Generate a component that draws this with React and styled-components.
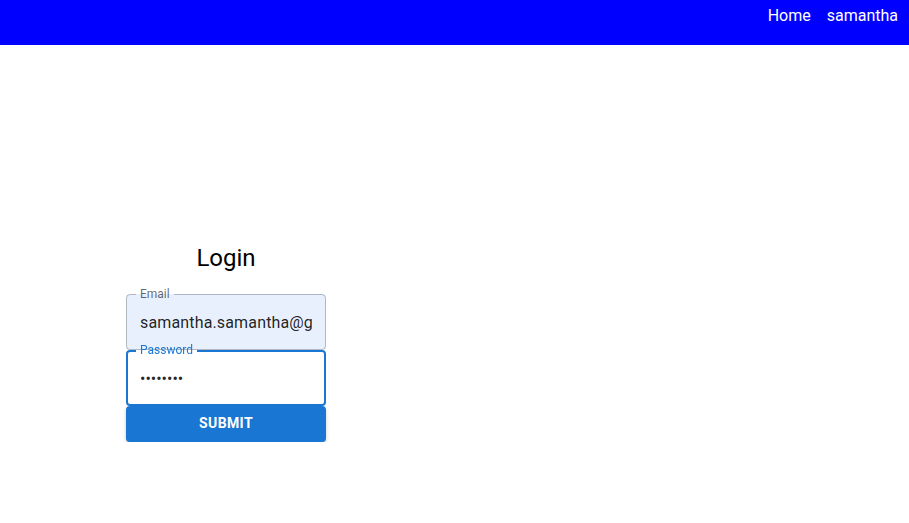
import React from 'react'
import styled, { createGlobalStyle } from 'styled-components';

const GlobalStyle = createGlobalStyle`
    body {
        margin: 0;
        font-family: Roboto, "Liberation Sans", sans-serif;
        background: #fff;
    }
`;

const Header = styled.header`
    height: 45px;
    background-color: #0000ff;
    display: flex;
    justify-content: flex-end;
    align-items: flex-start;
    gap: 16px;
    padding: 6px 11px 0 0;
    box-sizing: border-box;
`;

const NavLink = styled.a`
    color: #fff;
    font-size: 16px;
    line-height: 19px;
    text-decoration: none;
    cursor: pointer;
`;

const Main = styled.main`
    padding: 199px 0 0 126px;
`;

const Form = styled.form`
    width: 200px;
    display: flex;
    flex-direction: column;
`;

const Title = styled.h2`
    margin: 0 0 22px;
    font-size: 24px;
    font-weight: 400;
    line-height: 28px;
    text-align: center;
    color: #000;
`;

const FieldRoot = styled.div`
    position: relative;
    height: 56px;
    border-radius: 4px;
    background-color: ${props => props.filled ? "#e8f0fe" : "transparent"};
`;

const Input = styled.input`
    box-sizing: border-box;
    width: 100%;
    height: 56px;
    padding: 16.5px 14px;
    border: none;
    outline: none;
    background: transparent;
    font-family: Roboto, "Liberation Sans", sans-serif;
    font-size: 16px;
    color: rgba(0, 0, 0, 0.87);
    caret-color: #000;
    letter-spacing: ${props => props.type === "password" ? "0" : "0.15px"};
    clip-path: inset(0 14px 0 0);
`;

const Outline = styled.fieldset`
    position: absolute;
    inset: -5px 0 0 0;
    margin: 0;
    padding: 0 8px;
    pointer-events: none;
    border-radius: 4px;
    border-style: solid;
    border-width: ${props => props.focused ? "2px" : "1px"};
    border-color: ${props => props.focused ? "#1976d2" : "rgba(0, 0, 0, 0.23)"};
    text-align: left;
`;

const Legend = styled.legend`
    padding: 0 4px;
    margin-left: ${props => props.focused ? "0" : "1px"};
    font-size: 12px;
    line-height: 11px;
    color: ${props => props.focused ? "#1976d2" : "rgba(0, 0, 0, 0.6)"};
`;

const Button = styled.button`
    height: 36px;
    padding: 0 16px 2px;
    border: none;
    border-radius: 4px;
    background-color: #1976d2;
    color: #fff;
    font-family: Roboto, "Liberation Sans", sans-serif;
    font-size: 14px;
    font-weight: 700;
    letter-spacing: 0.4px;
    text-transform: uppercase;
    cursor: pointer;
    box-shadow: 0px 3px 1px -2px rgba(0,0,0,0.2), 0px 2px 2px 0px rgba(0,0,0,0.14), 0px 1px 5px 0px rgba(0,0,0,0.12);
`;

const Field = ({ label, type, value, filled, focused }) => (
    <FieldRoot filled={filled}>
        <Input type={type} defaultValue={value} autoFocus={focused} />
        <Outline focused={focused}>
            <Legend focused={focused}>{label}</Legend>
        </Outline>
    </FieldRoot>
);

export default function App() {
    return (
        <>
            <GlobalStyle />
            <Header>
                <NavLink>Home</NavLink>
                <NavLink>samantha</NavLink>
            </Header>
            <Main>
                <Form onSubmit={e => e.preventDefault()}>
                    <Title>Login</Title>
                    <Field label="Email" type="text" value="samantha.samantha@gmail.com" filled />
                    <Field label="Password" type="password" value="password" focused />
                    <Button type="submit">Submit</Button>
                </Form>
            </Main>
        </>
    )
}
